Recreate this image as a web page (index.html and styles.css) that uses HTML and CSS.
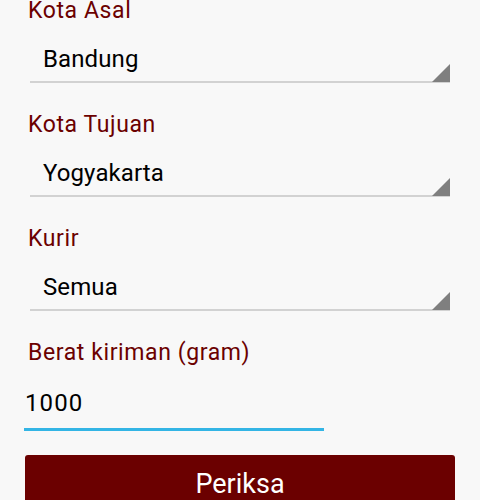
FILE: index.html
```html
<!DOCTYPE html>
<html>
<head>
<meta charset="utf-8">
<link rel="stylesheet" href="styles.css">
</head>
<body>
<div class="form">
  <div class="field">
    <div class="label">Kota Asal</div>
    <div class="spinner"><span class="spinner-text">Bandung</span><span class="arrow"></span></div>
  </div>
  <div class="field">
    <div class="label">Kota Tujuan</div>
    <div class="spinner"><span class="spinner-text">Yogyakarta</span><span class="arrow"></span></div>
  </div>
  <div class="field">
    <div class="label">Kurir</div>
    <div class="spinner"><span class="spinner-text">Semua</span><span class="arrow"></span></div>
  </div>
  <div class="field">
    <div class="label">Berat kiriman (gram)</div>
    <div class="input">1000</div>
  </div>
  <button class="button">Periksa</button>
</div>
</body>
</html>
```
FILE: styles.css
```css
html, body {
  margin: 0;
  padding: 0;
  background: #f8f8f8;
  font-family: Roboto, "Noto Sans", sans-serif;
  overflow: hidden;
}
.form {
  display: flex;
  flex-direction: column;
  padding: 0 25px;
}
.field {
  display: flex;
  flex-direction: column;
  margin-bottom: 31px;
}
.field:last-of-type {
  margin-bottom: 24px;
}
.label {
  color: #6b0000;
  font-size: 23px;
  letter-spacing: 0.6px;
  line-height: 22px;
  height: 22px;
  margin-bottom: 2px;
  padding-left: 3px;
}
.spinner {
  position: relative;
  margin-left: 5px;
  width: 420px;
  padding: 21px 0 8px 13px;
  box-sizing: border-box;
  border-bottom: 2px solid #d2d2d2;
  font-size: 24px;
  line-height: 28px;
  letter-spacing: 0.1px;
  color: #000;
}
.arrow {
  position: absolute;
  right: 0;
  bottom: -1px;
  width: 0;
  height: 0;
  border-style: solid;
  border-width: 0 0 18px 18px;
  border-color: transparent transparent #7f7f7f transparent;
}
.input {
  width: 300px;
  margin-left: -1px;
  padding: 23px 0 11px 1px;
  box-sizing: border-box;
  border-bottom: 3px solid #33b5e5;
  font-size: 24px;
  letter-spacing: 1.1px;
  line-height: 28px;
  color: #000;
}
.button {
  width: 430px;
  height: 60px;
  border: none;
  border-radius: 3px;
  background: #6b0000;
  color: #fff;
  font-family: Roboto, "Noto Sans", sans-serif;
  font-size: 27px;
  line-height: 30px;
  padding: 14px 0 0;
  display: flex;
  justify-content: center;
  align-items: flex-start;
}
```
